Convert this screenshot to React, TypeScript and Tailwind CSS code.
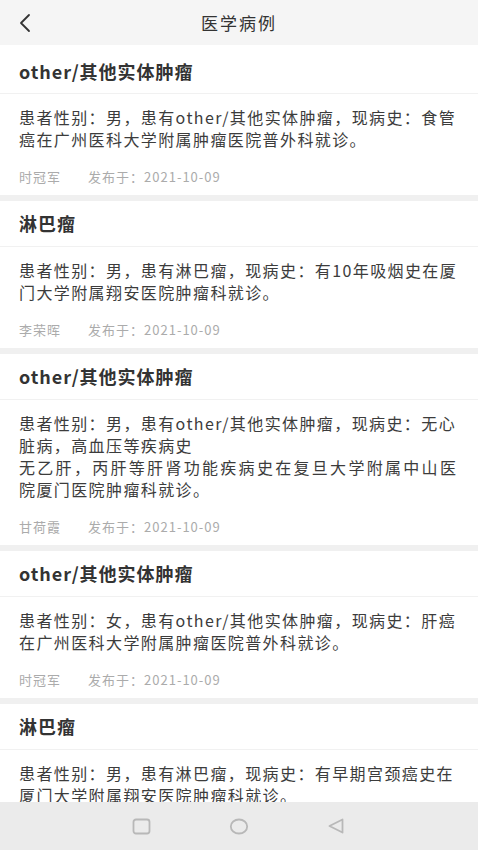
import React from 'react';

type CaseItem = {
  title: string;
  body: React.ReactNode;
  author: string;
  date: string;
};

const CASES: CaseItem[] = [
  {
    title: 'other/其他实体肿瘤',
    body: '患者性别：男，患有other/其他实体肿瘤，现病史：食管癌在广州医科大学附属肿瘤医院普外科就诊。',
    author: '时冠军',
    date: '2021-10-09',
  },
  {
    title: '淋巴瘤',
    body: '患者性别：男，患有淋巴瘤，现病史：有10年吸烟史在厦门大学附属翔安医院肿瘤科就诊。',
    author: '李荣晖',
    date: '2021-10-09',
  },
  {
    title: 'other/其他实体肿瘤',
    body: (
      <>
        患者性别：男，患有other/其他实体肿瘤，现病史：无心脏病，高血压等疾病史
        <br />
        <span className="whitespace-nowrap tracking-[2.3px]">无乙肝，丙肝等肝肾功能疾病史在复旦大学附属中山医</span>
        <br />
        院厦门医院肿瘤科就诊。
      </>
    ),
    author: '甘荷霞',
    date: '2021-10-09',
  },
  {
    title: 'other/其他实体肿瘤',
    body: '患者性别：女，患有other/其他实体肿瘤，现病史：肝癌在广州医科大学附属肿瘤医院普外科就诊。',
    author: '时冠军',
    date: '2021-10-09',
  },
  {
    title: '淋巴瘤',
    body: '患者性别：男，患有淋巴瘤，现病史：有早期宫颈癌史在厦门大学附属翔安医院肿瘤科就诊。',
    author: '李荣晖',
    date: '2021-10-09',
  },
];

function CaseCard({ item, first }: { item: CaseItem; first: boolean }) {
  return (
    <div className="bg-white">
      <div
        className={`${first ? 'h-[49px] pt-[5px]' : 'h-[46px]'} px-[19px] flex items-center border-b border-[#f1f1f1] text-[18px] font-bold tracking-[1px] text-[#333333]`}
      >
        {item.title}
      </div>
      <div className="px-[19px] pt-[12px] text-[16px] leading-[22px] tracking-[1.4px] text-[#3c3c3c]">
        {item.body}
      </div>
      <div className="px-[19px] mt-[17px] pb-[8px] flex h-[28px] text-[13px] leading-[20px] tracking-[1px] text-[#ababab]">
        <span className="w-[69px]">{item.author}</span>
        <span>发布于：{item.date}</span>
      </div>
    </div>
  );
}

function App() {
  return (
    <div
      className="w-[478px] h-[850px] flex flex-col bg-white overflow-hidden"
      style={{ fontFamily: '"Noto Sans CJK SC", "Noto Sans", sans-serif' }}
    >
      {/* Header */}
      <header className="h-[45px] bg-[#f5f5f5] relative flex items-center justify-center flex-shrink-0">
        <button className="absolute left-[17px] top-[13px] p-0">
          <svg width="16" height="20" viewBox="0 0 16 20" fill="none">
            <polyline points="12,2 4,10 12,18" stroke="#333" strokeWidth="1.8" strokeLinecap="round" strokeLinejoin="round" />
          </svg>
        </button>
        <h1 className="text-[17px] tracking-[2px] text-[#333333]">医学病例</h1>
      </header>

      {/* List */}
      <main className="flex-1 overflow-hidden">
        {CASES.map((item, i) => (
          <div key={i}>
            <CaseCard item={item} first={i === 0} />
            {i < CASES.length - 1 && <div className="h-[6px] bg-[#f0f0f0]" />}
          </div>
        ))}
      </main>

      {/* System nav bar */}
      <nav className="h-[48px] bg-[#ebebeb] flex items-center flex-shrink-0">
        <div className="w-full flex items-center pl-[132px] gap-[78px]">
          <svg width="19" height="17" viewBox="0 0 19 17" fill="none">
            <rect x="1.5" y="1.5" width="16" height="14" rx="2.5" stroke="#b8b8b8" strokeWidth="1.8" />
          </svg>
          <svg width="20" height="17" viewBox="0 0 20 17" fill="none">
            <ellipse cx="10" cy="8.5" rx="8.2" ry="7" stroke="#b8b8b8" strokeWidth="1.8" />
          </svg>
          <svg width="18" height="18" viewBox="0 0 18 18" fill="none">
            <path d="M15.5 2.5 L2.5 9 L15.5 15.5 Z" stroke="#b8b8b8" strokeWidth="1.8" strokeLinejoin="round" />
          </svg>
        </div>
      </nav>
    </div>
  );
}

export default App;
